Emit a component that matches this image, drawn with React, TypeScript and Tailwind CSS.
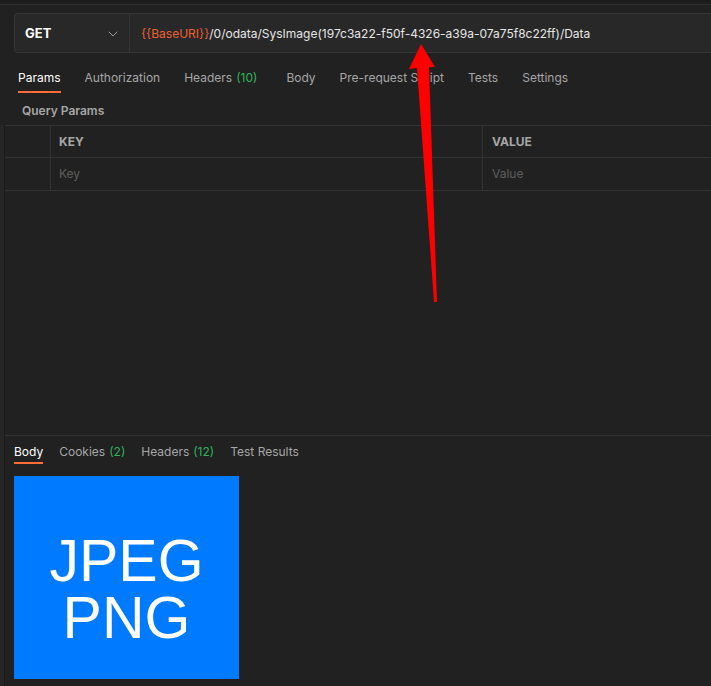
import { ChevronDown } from 'lucide-react';

const requestTabs = [
  { label: 'Params', active: true },
  { label: 'Authorization' },
  { label: 'Headers', count: '(10)' },
  { label: 'Body', extra: true },
  { label: 'Pre-request Script' },
  { label: 'Tests' },
  { label: 'Settings' },
];

const responseTabs = [
  { label: 'Body', active: true },
  { label: 'Cookies', count: '(2)' },
  { label: 'Headers', count: '(12)' },
  { label: 'Test Results' },
];

function Tab({ label, count, active, extra }: { label: string; count?: string; active?: boolean; extra?: boolean }) {
  return (
    <div className={`relative flex items-center h-full whitespace-nowrap ${extra ? 'ml-[5px]' : ''}`}>
      <span className={active ? 'text-white' : 'text-[#a6a6a6]'}>{label}</span>
      {count && <span className="ml-1 text-[#2eb35a]">{count}</span>}
      {active && <span className="absolute left-0 right-0 bottom-0 h-[2px] bg-[#ff6c37]" />}
    </div>
  );
}

export default function App() {
  return (
    <div
      className="relative w-[711px] h-[686px] overflow-hidden bg-[#212121] text-[12px]"
      style={{ fontFamily: 'Inter, "Noto Sans", sans-serif' }}
    >
      <div className="h-[5px] bg-[#1d1d1d] border-b border-[#303030]" />

      {/* request bar */}
      <div className="mt-[8px] ml-[14px] flex h-[40px] w-[720px] rounded-l-[4px] border border-[#363636] bg-[#282828]">
        <div className="flex w-[115px] items-center justify-between border-r border-[#363636] pl-[10px] pr-[8px] pt-[1px]">
          <span className="text-[13px] font-bold text-white">GET</span>
          <ChevronDown className="h-4 w-4 text-[#9a9a9a]" strokeWidth={1.5} />
        </div>
        <div className="flex items-center pl-[11px] pt-[1px] text-[#e6e6e6]">
          <span className="text-[#f0602f]">{'{{BaseURI}}'}</span>
          <span>/0/odata/SysImage(197c3a22-f50f-4326-a39a-07a75f8c22ff)/Data</span>
        </div>
      </div>

      {/* request tabs */}
      <div className="mt-[10px] ml-[18px] flex h-[30px] gap-[24px]">
        {requestTabs.map((t) => (
          <Tab key={t.label} {...t} />
        ))}
      </div>

      <div className="ml-[22px] mt-[8px] h-[20px] flex items-center text-[12px] font-semibold text-[#a6a6a6]">
        Query Params
      </div>

      {/* params area with left gutter */}
      <div className="mt-[4px] flex">
        <div className="w-[5px] h-[311px] bg-[#262626] border-r border-[#1a1a1a]" />
        <div className="flex-1 h-[311px] border-b border-[#333]">
          <div className="flex h-[33px] border-y border-[#333] text-[12px] font-bold text-[#a6a6a6]">
            <div className="w-[46px] border-r border-[#333]" />
            <div className="flex w-[432px] items-center border-r border-[#333] pl-[8px]">KEY</div>
            <div className="flex items-center pl-[9px]">VALUE</div>
          </div>
          <div className="flex h-[33px] border-b border-[#333] text-[12px] text-[#5e5e5e]">
            <div className="w-[46px] border-r border-[#333]" />
            <div className="flex w-[432px] items-center border-r border-[#333] pl-[8px]">Key</div>
            <div className="flex items-center pl-[9px]">Value</div>
          </div>
        </div>
      </div>

      {/* response */}
      <div className="flex">
        <div className="w-[5px] h-[260px] bg-[#262626] border-r border-[#1a1a1a]" />
        <div className="flex-1">
          <div className="ml-[9px] mt-[3px] flex h-[25px] gap-[16px]">
            {responseTabs.map((t) => (
              <Tab key={t.label} {...t} />
            ))}
          </div>
          <div
            className="ml-[9px] mt-[12px] flex h-[203px] w-[225px] flex-col items-center justify-center bg-[#007aff] pt-[24px] text-[59px] leading-[57px] text-white"
            style={{ fontFamily: '"Liberation Sans", Arial, sans-serif' }}
          >
            <span>JPEG</span>
            <span>PNG</span>
          </div>
        </div>
      </div>

      {/* red annotation arrow */}
      <svg className="pointer-events-none absolute left-0 top-0" width="711" height="686">
        <polygon
          points="421,44 435,67 429,67 437,302 434,302 417,68 409,69"
          fill="#ff0000"
        />
      </svg>
    </div>
  );
}
